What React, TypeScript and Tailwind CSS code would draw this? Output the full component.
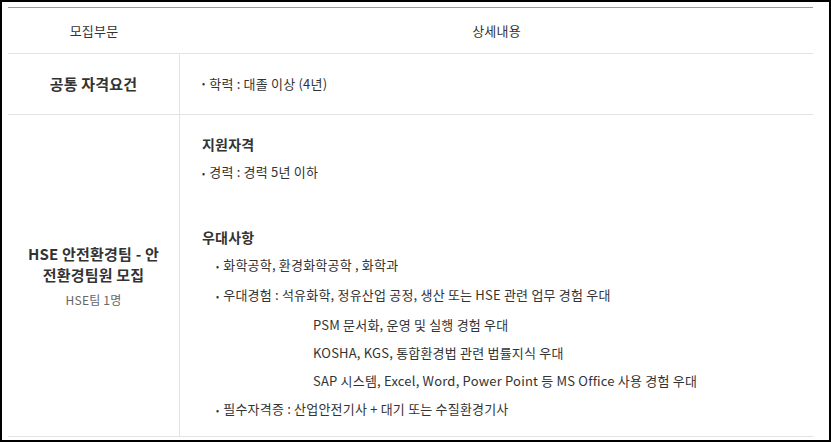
import React from 'react';

const font = { fontFamily: '"Noto Sans CJK KR", "Noto Sans", sans-serif' };

export default function App() {
  const preferred = [
    { text: '화학공학, 환경화학공학 , 화학과', bullet: true },
    { text: '우대경험 : 석유화학, 정유산업 공정, 생산 또는 HSE 관련 업무 경험 우대', bullet: true },
    { text: 'PSM 문서화, 운영 및 실행 경험 우대', bullet: false },
    { text: 'KOSHA, KGS, 통합환경법 관련 법률지식 우대', bullet: false },
    { text: 'SAP 시스템, Excel, Word, Power Point 등 MS Office 사용 경험 우대', bullet: false },
    { text: '필수자격증 : 산업안전기사 + 대기 또는 수질환경기사', bullet: true }
  ];

  return (
    <div
      className="h-[442px] w-[831px] border-2 border-black bg-white pl-[6px] pr-[16px] pt-[5px] text-[#333] tracking-[0.2px]"
      style={font}
    >
      <div className="border-t border-[#e97493]">
        <div className="flex h-[46px] items-center border-b border-[#e3e3e3] text-[13px]">
          <div className="w-[172px] text-center">모집부문</div>
          <div className="flex-1 text-center">상세내용</div>
        </div>

        <div className="flex h-[61px] border-b border-[#e3e3e3]">
          <div className="flex w-[172px] items-center justify-center border-r border-[#e3e3e3] text-[15px] font-bold">
            공통 자격요건
          </div>
          <div className="flex flex-1 items-center pl-[22px] text-[13px]">
            <span className="mr-[4px] text-[9px]">•</span>학력 : 대졸 이상 (4년)
          </div>
        </div>

        <div className="flex h-[322px] border-b border-[#e3e3e3]">
          <div className="flex w-[172px] flex-col items-center justify-center border-r border-[#e3e3e3] px-[16px] text-center">
            <div className="text-[15px] font-bold leading-[21px]">
              HSE 안전환경팀 - 안<br />전환경팀원 모집
            </div>
            <div className="mt-[6px] text-[12px] leading-[18px] text-[#666]">HSE팀 1명</div>
          </div>
          <div className="flex-1 pl-[22px] pt-[15px] text-[13px] leading-[28px]">
            <div className="text-[14px] font-bold">지원자격</div>
            <div>
              <span className="mr-[4px] text-[9px]">•</span>경력 : 경력 5년 이하
            </div>
            <div className="mt-[35px] text-[14px] font-bold">우대사항</div>
            {preferred.map((item, index) => (
              <div key={index} className={item.bullet ? 'pl-[14px]' : 'pl-[111px]'}>
                {item.bullet && <span className="mr-[4px] text-[9px]">•</span>}
                {item.text}
              </div>
            ))}
          </div>
        </div>
      </div>
    </div>
  );
}
